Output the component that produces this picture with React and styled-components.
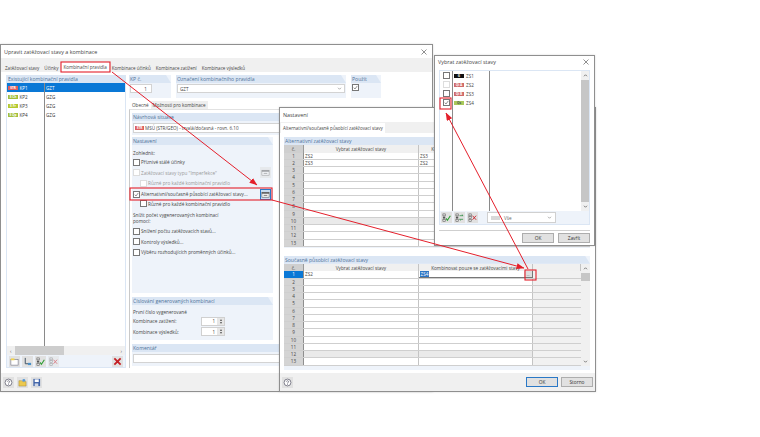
import React from "react";
import styled, { createGlobalStyle } from "styled-components";

const GlobalStyle = createGlobalStyle`
  html, body { margin: 0; padding: 0; background: #fff; }
  body { width: 760px; height: 437px; overflow: hidden; font-family: "Open Sans", "Liberation Sans", sans-serif; color: #333; }
  * { box-sizing: border-box; }
`;

const rulesList = [
  { badge: "STR", color: "#dd5f5f", name: "KP1", type: "GZT", selected: true },
  { badge: "S Ch", color: "#a3bf3d", name: "KP2", type: "GZG" },
  { badge: "S Fr", color: "#b5c92f", name: "KP3", type: "GZG" },
  { badge: "S Qp", color: "#a3bf3d", name: "KP4", type: "GZG" },
];

const loadCases = [
  { name: "ZS1", badge: "G", color: "#111", text: "#fff" },
  { name: "ZS2", badge: "Qi A", color: "#cf6b6b", text: "#fff", disabled: true },
  { name: "ZS3", badge: "Qi B", color: "#cf6b6b", text: "#fff" },
  { name: "ZS4", badge: "Qs", color: "#a9c85a", text: "#455", checked: true },
];

const rowNumbers = [1, 2, 3, 4, 5, 6, 7, 8, 9, 10, 11, 12, 13];

const Check = () => (
  <CheckMark viewBox="0 0 8 8">
    <path d="M1.2 4.2 3.2 6.4 6.9 1.4" fill="none" stroke="#444" strokeWidth="0.9" />
  </CheckMark>
);

const IconNew = () => (
  <svg viewBox="0 0 10 10" width="9" height="9">
    <rect x="1" y="3" width="8" height="6" fill="#fff" stroke="#667" strokeWidth="0.6" />
    <rect x="1" y="1.6" width="4" height="2" fill="#f2d34c" />
  </svg>
);
const IconCopy = () => (
  <svg viewBox="0 0 10 10" width="9" height="9">
    <path d="M2.5 1v6.5H8" fill="none" stroke="#456" strokeWidth="1.1" />
    <rect x="5.5" y="6.5" width="3.5" height="2.5" fill="#4a90c8" />
  </svg>
);
const IconCheckAll = () => (
  <svg viewBox="0 0 10 10" width="9" height="9">
    <rect x="1" y="1" width="2.6" height="2.2" fill="none" stroke="#555" strokeWidth="0.6" />
    <rect x="1" y="4" width="2.6" height="2.2" fill="#555" />
    <rect x="1" y="7" width="2.6" height="2.2" fill="none" stroke="#555" strokeWidth="0.6" />
    <path d="M4.5 6 6 8 9.3 3" fill="none" stroke="#2f9e35" strokeWidth="1.2" />
  </svg>
);
const IconSwap = () => (
  <svg viewBox="0 0 10 10" width="9" height="9">
    <rect x="1" y="1" width="2.6" height="2.2" fill="none" stroke="#555" strokeWidth="0.6" />
    <rect x="1" y="4" width="2.6" height="2.2" fill="#555" />
    <rect x="1" y="7" width="2.6" height="2.2" fill="none" stroke="#555" strokeWidth="0.6" />
    <path d="M5 3h4M9 3 7.6 1.8M9 7H5M5 7l1.4 1.2" fill="none" stroke="#2f8e45" strokeWidth="0.9" />
  </svg>
);
const IconClearAll = () => (
  <svg viewBox="0 0 10 10" width="9" height="9">
    <rect x="1" y="1" width="2.6" height="2.2" fill="none" stroke="#555" strokeWidth="0.6" />
    <rect x="1" y="4" width="2.6" height="2.2" fill="none" stroke="#555" strokeWidth="0.6" />
    <rect x="1" y="7" width="2.6" height="2.2" fill="none" stroke="#555" strokeWidth="0.6" />
    <path d="M5 3 9 7.5M9 3 5 7.5" stroke="#c8323a" strokeWidth="1.1" />
  </svg>
);
const IconDelete = () => (
  <svg viewBox="0 0 10 10" width="9" height="9">
    <path d="M1.5 1.5 8.5 8.5M8.5 1.5 1.5 8.5" stroke="#c41f25" strokeWidth="2" />
  </svg>
);
const IconHelp = () => (
  <svg viewBox="0 0 10 10" width="9" height="9">
    <circle cx="5" cy="5" r="3.8" fill="#fff" stroke="#556" strokeWidth="0.8" />
    <path d="M3.7 4C4 2.6 6.4 2.8 6.2 4.2 6 5.2 5 5 5 6.2M5 7v.8" fill="none" stroke="#556" strokeWidth="0.8" />
  </svg>
);
const IconOpen = () => (
  <svg viewBox="0 0 10 10" width="9" height="9">
    <path d="M1 3h3l1 1h4v5H1z" fill="#ecc94f" stroke="#9a8232" strokeWidth="0.5" />
    <circle cx="6.5" cy="2.6" r="1.6" fill="#5b9bd5" />
  </svg>
);
const IconSave = () => (
  <svg viewBox="0 0 10 10" width="9" height="9">
    <rect x="1.5" y="1" width="7.5" height="8" fill="#3f63a8" />
    <rect x="3" y="1.5" width="4.5" height="3" fill="#fff" />
    <rect x="3" y="6" width="4" height="3" fill="#cfd8e8" />
  </svg>
);
const IconDetail = () => (
  <svg viewBox="0 0 10 10" width="9" height="9">
    <rect x="1" y="2.5" width="8" height="5.5" fill="#f4f4f4" stroke="#555" strokeWidth="0.6" />
    <rect x="1" y="2.5" width="8" height="1.6" fill="#555" />
    <path d="M3 6h4" stroke="#555" strokeWidth="0.8" />
  </svg>
);

const CheckMark = styled.svg`
  display: block;
  width: 100%;
  height: 100%;
`;
const Desktop = styled.div`
  position: relative;
  width: 760px;
  height: 437px;
  overflow: hidden;
  background: #fff;
`;
const Window = styled.div`
  position: absolute;
  left: ${(p) => p.$x}px;
  top: ${(p) => p.$y}px;
  width: ${(p) => p.$w}px;
  height: ${(p) => p.$h}px;
  display: flex;
  flex-direction: column;
  background: #fff;
  border: 1px solid #8f8f8f;
  box-shadow: 0 0 2px rgba(0, 0, 0, 0.15);
`;
const TitleBar = styled.div`
  height: ${(p) => p.$h}px;
  flex: none;
  display: flex;
  align-items: center;
  justify-content: space-between;
  padding: 0 5px 0 3px;
  font-size: 5.4px;
  color: #444;
`;
const CloseX = styled.svg`
  width: 6px;
  height: 6px;
  flex: none;
`;
const TabRow = styled.div`
  flex: none;
  display: flex;
  align-items: flex-end;
  gap: 1px;
  height: ${(p) => p.$h}px;
  padding-left: ${(p) => p.$pad || 2}px;
  background: ${(p) => p.$bg || "#f0f0f0"};
`;
const Tab = styled.div`
  height: ${(p) => (p.$active ? 10 : 9)}px;
  padding: 0 2px;
  display: flex;
  align-items: center;
  font-size: 4.55px;
  white-space: nowrap;
  color: #444;
  background: ${(p) => (p.$active ? "#fff" : "#f0f0f0")};
`;
const Body = styled.div`
  flex: 1;
  min-height: 0;
  display: flex;
  gap: 3px;
  padding: 3px 0 5px 5px;
`;
const Footer = styled.div`
  flex: none;
  height: ${(p) => p.$h}px;
  display: flex;
  align-items: center;
  gap: 3px;
  padding: 0 ${(p) => p.$right || 3}px 0 2px;
  background: #f0f0f0;
`;
const Spacer = styled.div`
  flex: 1;
`;
const FooterButton = styled.div`
  width: 32px;
  height: 10px;
  display: flex;
  align-items: center;
  justify-content: center;
  font-size: 4.8px;
  color: #333;
  background: #e1e1e1;
  border: 1px solid ${(p) => (p.$primary ? "#2a78c6" : "#adadad")};
`;
const ToolButton = styled.div`
  width: ${(p) => p.$size || 11}px;
  height: ${(p) => p.$size || 11}px;
  flex: none;
  display: flex;
  align-items: center;
  justify-content: center;
  background: ${(p) => (p.$focus ? "#c9def2" : "#e1e1e1")};
  border: ${(p) => (p.$focus ? "1px solid #2a78c6" : "none")};
  opacity: ${(p) => (p.$dim ? 0.55 : 1)};
`;

const LeftPanel = styled.div`
  width: 120px;
  flex: none;
  display: flex;
  flex-direction: column;
  background: #eef3fa;
  border: 1px solid #dbe6f4;
  border-top: none;
`;
const GroupTitle = styled.div`
  height: ${(p) => p.$h || 8}px;
  flex: none;
  display: flex;
  align-items: center;
  padding-left: 1px;
  font-size: 5.1px;
  white-space: nowrap;
  color: #4f7299;
  background: #dbe6f4;
  clip-path: ${(p) => (p.$cut ? "polygon(0 0, calc(100% - 5px) 0, 100% 100%, 0 100%)" : "none")};
`;
const RuleList = styled.div`
  flex: 1;
  min-height: 0;
  display: flex;
  flex-direction: column;
  background: #fff;
  position: relative;
`;
const RuleColumnLine = styled.div`
  position: absolute;
  left: 37px;
  top: 0;
  bottom: 0;
  width: 1px;
  background: #8a8a8a;
`;
const RuleRow = styled.div`
  height: 9px;
  display: grid;
  grid-template-columns: 38px 1fr;
  align-items: center;
  font-size: 4.6px;
  color: ${(p) => (p.$selected ? "#fff" : "#333")};
  background: ${(p) => (p.$selected ? "#0a78d6" : "transparent")};
`;
const RuleCell = styled.div`
  display: flex;
  align-items: center;
  gap: 1.5px;
  padding-left: 1px;
`;
const Badge = styled.span`
  width: ${(p) => p.$w || 10}px;
  height: 4px;
  flex: none;
  display: inline-flex;
  align-items: center;
  justify-content: center;
  font-size: 3.2px;
  font-weight: 700;
  color: ${(p) => p.$text || "#fff"};
  background: ${(p) => p.$color};
`;
const HScroll = styled.div`
  height: 9px;
  flex: none;
  display: flex;
  align-items: center;
  justify-content: space-between;
  padding: 0 3px;
  font-size: 5px;
  color: #555;
  background: #f0f0f0;
  position: relative;
`;
const HThumb = styled.div`
  position: absolute;
  left: 8px;
  top: 0;
  width: 49px;
  height: 100%;
  background: #cdcdcd;
`;
const ToolRow = styled.div`
  height: ${(p) => p.$h || 12}px;
  flex: none;
  display: flex;
  align-items: center;
  gap: 2px;
  padding: 0 ${(p) => p.$pad || 2}px;
  background: #eef3fa;
`;

const RightColumn = styled.div`
  flex: 1;
  min-width: 0;
  display: flex;
  flex-direction: column;
`;
const HeaderRow = styled.div`
  flex: none;
  display: flex;
  gap: 5px;
  height: 23px;
`;
const HeaderGroup = styled.div`
  width: ${(p) => p.$w}px;
  flex: none;
  display: flex;
  flex-direction: column;
  background: #eef3fa;
`;
const FieldWrap = styled.div`
  padding: 1px 1px;
  flex: 1;
`;
const Field = styled.div`
  height: ${(p) => p.$h || 8}px;
  width: ${(p) => (p.$w ? p.$w + "px" : "auto")};
  display: flex;
  align-items: center;
  justify-content: ${(p) => (p.$end ? "flex-end" : "space-between")};
  gap: 1px;
  padding: 0 ${(p) => (p.$end ? 4 : 2)}px 0 ${(p) => p.$left ?? 2}px;
  font-size: 4.6px;
  color: #444;
  background: #fff;
  border: 1px solid #d3d3d3;
`;
const Caret = styled.svg`
  width: 5px;
  height: 3px;
  flex: none;
`;
const SubTabs = styled.div`
  flex: none;
  display: flex;
  align-items: flex-end;
  height: 8px;
  padding-left: 1px;
  margin-top: 3px;
`;
const SubTab = styled.div`
  height: 8px;
  padding: 0 2px;
  display: flex;
  align-items: center;
  font-size: 4.6px;
  color: #444;
  background: ${(p) => (p.$active ? "#fff" : "#eee")};
`;
const TabPage = styled.div`
  flex: 1;
  min-height: 0;
  display: flex;
  flex-direction: column;
  gap: 2px;
  padding: 3px 0 2px 2px;
  border-left: 1px solid #c9c9c9;
  border-top: 1px solid #e2e2e2;
`;
const Group = styled.div`
  flex: ${(p) => (p.$grow ? 1 : "none")};
  height: ${(p) => (p.$h ? p.$h + "px" : "auto")};
  width: ${(p) => (p.$w ? p.$w + "px" : "auto")};
  margin-top: ${(p) => p.$mt || 0}px;
  display: flex;
  flex-direction: column;
  background: #eef3fa;
`;
const GroupBody = styled.div`
  flex: 1;
  padding: ${(p) => p.$pad || "2px 2px"};
  display: flex;
  flex-direction: column;
`;
const Label = styled.div`
  height: ${(p) => p.$h || 8}px;
  margin-top: ${(p) => p.$mt || 0}px;
  display: flex;
  align-items: center;
  font-size: 4.7px;
  white-space: nowrap;
  color: ${(p) => (p.$dim ? "#999" : "#444")};
`;
const CheckLine = styled.div`
  height: ${(p) => p.$h || 10}px;
  margin-top: ${(p) => p.$mt || 0}px;
  display: flex;
  align-items: center;
  gap: 1px;
  padding-left: ${(p) => p.$indent || 0}px;
  font-size: 4.7px;
  white-space: nowrap;
  color: ${(p) => (p.$dim ? "#999" : "#444")};
`;
const Box = styled.div`
  width: 7px;
  height: 7px;
  flex: none;
  background: #fff;
  border: 0.7px solid ${(p) => (p.$dim ? "#ddd" : "#777")};
`;
const CheckText = styled.span`
  flex: 1;
`;
const SpinRow = styled.div`
  height: 10.5px;
  display: flex;
  align-items: center;
  justify-content: space-between;
  padding-right: 47px;
  font-size: 4.7px;
  color: #444;
`;
const Spin = styled.div`
  width: 24px;
  height: 9px;
  display: flex;
  align-items: center;
  justify-content: space-between;
  padding-left: 2px;
  font-size: 4.5px;
  background: #fff;
  border: 1px solid #d0d0d0;
`;
const SpinNumber = styled.span`
  flex: 1;
  text-align: right;
  padding-right: 2px;
`;
const SpinArrows = styled.div`
  width: 7px;
  height: 100%;
  display: flex;
  flex-direction: column;
  align-items: center;
  justify-content: center;
  gap: 1px;
  background: #e6e6e6;
`;
const SpinTick = styled.div`
  width: 0;
  height: 0;
  border-left: 1.5px solid transparent;
  border-right: 1.5px solid transparent;
  border-${(p) => (p.$down ? "top" : "bottom")}: 2px solid #555;
`;

const SettingsBody = styled.div`
  flex: 1;
  min-height: 0;
  display: flex;
  flex-direction: column;
  padding: 4px 5px 3px 4px;
`;
const TableGroup = styled.div`
  flex: none;
  background: #eef3fa;
  margin-bottom: ${(p) => p.$mb || 0}px;
  padding-bottom: ${(p) => p.$pb || 0}px;
`;
const TableWrap = styled.div`
  display: flex;
`;
const Table = styled.div`
  flex: 1;
  min-width: 0;
`;
const TableHead = styled.div`
  display: grid;
  grid-template-columns: 20px 115px 114px 1fr;
  height: 7.5px;
  font-size: 4.7px;
  color: #444;
  background: #f0f0f0;
`;
const HeadCell = styled.div`
  display: flex;
  align-items: center;
  justify-content: center;
  overflow: hidden;
  white-space: nowrap;
  background: ${(p) => (p.$first ? "#cfcfcf" : "#f0f0f0")};
  border-right: 1px solid ${(p) => (p.$first ? "#9a9a9a" : "#c4c4c4")};
`;
const TableRow = styled.div`
  display: grid;
  grid-template-columns: 20px 115px 114px 1fr;
  height: 7.25px;
  font-size: 4.6px;
  color: #444;
  background: ${(p) => (p.$muted ? "#eaeaea" : "#fff")};
  border-bottom: 0.75px solid #cfcfcf;
`;
const NumberCell = styled.div`
  display: flex;
  align-items: center;
  justify-content: center;
  color: ${(p) => (p.$active ? "#fff" : "#444")};
  background: ${(p) => (p.$active ? "#0a78d6" : "#d4d4d4")};
  border-right: 1px solid #8f8f8f;
`;
const DataCell = styled.div`
  display: flex;
  align-items: center;
  justify-content: space-between;
  padding-left: 1px;
  overflow: hidden;
  border-right: ${(p) => (p.$edit ? "1px solid #777" : "1px solid #c4c4c4")};
  border-bottom: ${(p) => (p.$edit ? "1px solid #777" : "none")};
`;
const EndCell = styled.div`
  background: #f1f1f1;
`;
const SelectedText = styled.span`
  color: #fff;
  background: #2b74c4;
  padding: 0 0.5px;
`;
const BrowseButton = styled.div`
  width: 8px;
  height: 100%;
  display: flex;
  align-items: flex-end;
  justify-content: center;
  font-size: 4px;
  line-height: 4px;
  background: #dedede;
`;
const VScroll = styled.div`
  width: ${(p) => p.$w || 8}px;
  flex: none;
  display: flex;
  flex-direction: column;
  align-items: center;
  background: #f0f0f0;
`;
const ScrollThumb = styled.div`
  width: 100%;
  flex: ${(p) => (p.$grow ? 1 : "none")};
  height: ${(p) => (p.$h ? p.$h + "px" : "auto")};
  background: #c6c6c6;
`;
const ScrollTrack = styled.div`
  flex: 1;
`;
const ScrollArrow = styled.svg`
  width: 5px;
  height: 3px;
  flex: none;
  margin: 3px 0;
`;

const PickerBody = styled.div`
  flex: 1;
  min-height: 0;
  display: flex;
  flex-direction: column;
  padding: 2px 4px 0 4px;
`;
const PickerPanel = styled.div`
  flex: none;
  background: #eef3fa;
  border: 1px solid #dbe6f4;
`;
const PickerList = styled.div`
  height: 140px;
  display: grid;
  grid-template-columns: 13px 37px 1fr 8px;
  background: #fff;
`;
const PickerChecks = styled.div`
  display: flex;
  flex-direction: column;
  align-items: center;
  border-right: 1px solid #8a8a8a;
`;
const PickerNames = styled.div`
  display: flex;
  flex-direction: column;
  border-right: 1px solid #8a8a8a;
`;
const PickerCheck = styled.div`
  height: 9px;
  display: flex;
  align-items: center;
`;
const PickerName = styled.div`
  height: 9px;
  display: flex;
  align-items: center;
  gap: 2px;
  padding-left: 1px;
  font-size: 4.6px;
  color: #444;
`;
const PickerBlank = styled.div``;
const FilterSelect = styled.div`
  width: 69px;
  height: 11px;
  margin-left: 7px;
  display: flex;
  align-items: center;
  justify-content: space-between;
  padding: 0 3px;
  font-size: 4.6px;
  color: #666;
  background: #fff;
  border: 1px solid #d0d0d0;
`;
const FilterLabel = styled.div`
  display: flex;
  align-items: center;
  gap: ${(p) => p.$gap ?? 4}px;
  white-space: nowrap;
`;
const Swatch = styled.div`
  width: 9px;
  height: 4px;
  background: #d8d8d8;
`;
const Divider = styled.div`
  flex: none;
  height: 1px;
  margin-top: 5px;
  background: #cfcfcf;
`;
const PickerFooter = styled.div`
  flex: 1;
  display: flex;
  align-items: center;
  justify-content: flex-end;
  gap: 4px;
`;

const Marks = styled.svg`
  position: absolute;
  left: 0;
  top: 0;
  width: 760px;
  height: 437px;
  pointer-events: none;
`;

function SettingsTable({ rows, active, muted, withScroll }) {
  return (
    <TableWrap>
      <Table>
        <TableHead>
          <HeadCell $first>č.</HeadCell>
          <HeadCell>Vybrat zatěžovací stavy</HeadCell>
          <HeadCell>Kombinovat pouze se zatěžovacími stavy</HeadCell>
          <HeadCell />
        </TableHead>
        {rowNumbers.map((n) => {
          const row = rows[n - 1] || [];
          const editing = active && n === 1;
          return (
            <TableRow key={n} $muted={muted === n}>
              <NumberCell $active={editing}>{n}</NumberCell>
              <DataCell>{row[0]}</DataCell>
              <DataCell $edit={editing}>
                {editing ? <SelectedText>{row[1]}</SelectedText> : row[1]}
                {editing && <BrowseButton>...</BrowseButton>}
              </DataCell>
              <EndCell />
            </TableRow>
          );
        })}
      </Table>
      {withScroll && (
        <VScroll $w={9}>
          <ScrollArrow viewBox="0 0 6 4"><path d="M1 3 3 1l2 2" fill="none" stroke="#555" /></ScrollArrow>
          <ScrollThumb $h={8} />
          <ScrollTrack />
          <ScrollArrow viewBox="0 0 6 4"><path d="M1 1l2 2 2-2" fill="none" stroke="#555" /></ScrollArrow>
        </VScroll>
      )}
    </TableWrap>
  );
}

function CloseIcon() {
  return (
    <CloseX viewBox="0 0 6 6">
      <path d="M.5.5l5 5M5.5.5l-5 5" stroke="#444" strokeWidth="0.6" />
    </CloseX>
  );
}

export default function App() {
  return (
    <Desktop>
      <GlobalStyle />

      <Window $x={0} $y={44} $w={433} $h={348}>
        <TitleBar $h={13}>
          <span>Upravit zatěžovací stavy a kombinace</span>
          <CloseIcon />
        </TitleBar>
        <TabRow $h={14}>
          <Tab>Zatěžovací stavy</Tab>
          <Tab>Účinky</Tab>
          <Tab $active>Kombinační pravidla</Tab>
          <Tab>Kombinace účinků</Tab>
          <Tab>Kombinace zatížení</Tab>
          <Tab>Kombinace výsledků</Tab>
        </TabRow>
        <Body>
          <LeftPanel>
            <GroupTitle>Existující kombinační pravidla</GroupTitle>
            <RuleList>
              <RuleColumnLine />
              {rulesList.map((rule) => (
                <RuleRow key={rule.name} $selected={rule.selected}>
                  <RuleCell>
                    <Badge $color={rule.color}>{rule.badge}</Badge>
                    {rule.name}
                  </RuleCell>
                  <RuleCell>{rule.type}</RuleCell>
                </RuleRow>
              ))}
            </RuleList>
            <HScroll>
              <HThumb />
              <span>‹</span>
              <span>›</span>
            </HScroll>
            <ToolRow>
              <ToolButton><IconNew /></ToolButton>
              <ToolButton><IconCopy /></ToolButton>
              <ToolButton><IconCheckAll /></ToolButton>
              <ToolButton $dim><IconClearAll /></ToolButton>
              <Spacer />
              <ToolButton><IconDelete /></ToolButton>
            </ToolRow>
          </LeftPanel>
          <RightColumn>
            <HeaderRow>
              <HeaderGroup $w={42}>
                <GroupTitle $cut>KP č.</GroupTitle>
                <FieldWrap>
                  <Field $h={9} $w={22} $end>1</Field>
                </FieldWrap>
              </HeaderGroup>
              <HeaderGroup $w={170}>
                <GroupTitle $cut>Označení kombinačního pravidla</GroupTitle>
                <FieldWrap>
                  <Field $h={9}>
                    GZT
                    <Caret viewBox="0 0 6 4"><path d="M1 1l2 2 2-2" fill="none" stroke="#666" strokeWidth="0.7" /></Caret>
                  </Field>
                </FieldWrap>
              </HeaderGroup>
              <HeaderGroup $w={30}>
                <GroupTitle $cut>Použít</GroupTitle>
                <FieldWrap>
                  <Box><Check /></Box>
                </FieldWrap>
              </HeaderGroup>
            </HeaderRow>
            <SubTabs>
              <SubTab $active>Obecné</SubTab>
              <SubTab>Možnosti pro kombinace</SubTab>
            </SubTabs>
            <TabPage>
              <Group $h={22}>
                <GroupTitle>Návrhová situace</GroupTitle>
                <GroupBody $pad="2px 1px">
                  <Field $h={10} $left={1}>
                    <FilterLabel $gap={1}>
                      <Badge $w={9} $color="#dd5f5f">STR</Badge>
                      <span>MSÚ (STR/GEO) - trvalá/dočasná - rovn. 6.10</span>
                    </FilterLabel>
                  </Field>
                </GroupBody>
              </Group>
              <Group $h={156} $w={141}>
                <GroupTitle $cut>Nastavení</GroupTitle>
                <GroupBody $pad="4px 2px 0 1px">
                  <Label $h={8}>Zohlednit:</Label>
                  <CheckLine><Box /><CheckText>Příznivé stálé účinky</CheckText></CheckLine>
                  <CheckLine $dim $h={11}><Box $dim /><CheckText>Zatěžovací stavy typu "Imperfekce"</CheckText><ToolButton $dim><IconDetail /></ToolButton></CheckLine>
                  <CheckLine $dim $indent={7}><Box $dim /><CheckText>Různé pro každé kombinační pravidlo</CheckText></CheckLine>
                  <CheckLine $h={12}><Box><Check /></Box><CheckText>Alternativní/současně působící zatěžovací stavy...</CheckText><ToolButton $focus><IconDetail /></ToolButton></CheckLine>
                  <CheckLine $h={7} $indent={7}><Box /><CheckText>Různé pro každé kombinační pravidlo</CheckText></CheckLine>
                  <Label $h={6} $mt={5}>Snížit počet vygenerovaných kombinací</Label>
                  <Label $h={6}>pomocí:</Label>
                  <CheckLine $mt={2}><Box /><CheckText>Snížení počtu zatěžovacích stavů...</CheckText></CheckLine>
                  <CheckLine $h={11}><Box /><CheckText>Kontroly výsledků...</CheckText></CheckLine>
                  <CheckLine><Box /><CheckText>Výběru rozhodujících proměnných účinků...</CheckText></CheckLine>
                </GroupBody>
              </Group>
              <Group $h={43} $w={141} $mt={2}>
                <GroupTitle $cut>Číslování generovaných kombinací</GroupTitle>
                <GroupBody $pad="3px 1px">
                  <Label $h={8}>První číslo vygenerované</Label>
                  <SpinRow>
                    Kombinace zatížení:
                    <Spin>
                      <SpinNumber>1</SpinNumber>
                      <SpinArrows><SpinTick /><SpinTick $down /></SpinArrows>
                    </Spin>
                  </SpinRow>
                  <SpinRow>
                    Kombinace výsledků:
                    <Spin>
                      <SpinNumber>1</SpinNumber>
                      <SpinArrows><SpinTick /><SpinTick $down /></SpinArrows>
                    </Spin>
                  </SpinRow>
                </GroupBody>
              </Group>
              <Group $grow $mt={2}>
                <GroupTitle>Komentář</GroupTitle>
                <GroupBody $pad="2px 1px">
                  <Field $h={9} />
                </GroupBody>
              </Group>
            </TabPage>
          </RightColumn>
        </Body>
        <Footer $h={18}>
          <ToolButton><IconHelp /></ToolButton>
          <ToolButton><IconOpen /></ToolButton>
          <ToolButton><IconSave /></ToolButton>
        </Footer>
      </Window>

      <Window $x={279} $y={107} $w={317} $h={285}>
        <TitleBar $h={14}>
          <span>Nastavení</span>
        </TitleBar>
        <TabRow $h={11} $pad={1}>
          <Tab $active>Alternativní/současně působící zatěžovací stavy</Tab>
        </TabRow>
        <SettingsBody>
          <TableGroup $mb={8} $pb={1}>
            <GroupTitle>Alternativní zatěžovací stavy</GroupTitle>
            <SettingsTable rows={[["ZS2", "ZS3"], ["ZS3", "ZS2"]]} muted={10} />
          </TableGroup>
          <TableGroup $pb={4}>
            <GroupTitle $cut>Současně působící zatěžovací stavy</GroupTitle>
            <SettingsTable rows={[["ZS2", "ZS4"]]} active muted={12} withScroll />
          </TableGroup>
        </SettingsBody>
        <Footer $h={18} $right={2}>
          <ToolButton><IconHelp /></ToolButton>
          <Spacer />
          <FooterButton $primary>OK</FooterButton>
          <FooterButton>Storno</FooterButton>
        </Footer>
      </Window>

      <Window $x={434} $y={55} $w={161} $h={191}>
        <TitleBar $h={12}>
          <span>Vybrat zatěžovací stavy</span>
          <CloseIcon />
        </TitleBar>
        <PickerBody>
          <PickerPanel>
            <PickerList>
              <PickerChecks>
                {loadCases.map((c) => (
                  <PickerCheck key={c.name}>
                    <Box $dim={c.disabled}>{c.checked && <Check />}</Box>
                  </PickerCheck>
                ))}
              </PickerChecks>
              <PickerNames>
                {loadCases.map((c) => (
                  <PickerName key={c.name}>
                    <Badge $w={10} $color={c.color} $text={c.text}>{c.badge}</Badge>
                    {c.name}
                  </PickerName>
                ))}
              </PickerNames>
              <PickerBlank />
              <VScroll>
                <ScrollArrow viewBox="0 0 6 4"><path d="M1 3 3 1l2 2" fill="none" stroke="#555" /></ScrollArrow>
                <ScrollThumb $grow />
                <ScrollArrow viewBox="0 0 6 4"><path d="M1 1l2 2 2-2" fill="none" stroke="#555" /></ScrollArrow>
              </VScroll>
            </PickerList>
            <ToolRow $h={13} $pad={1}>
              <ToolButton><IconCheckAll /></ToolButton>
              <ToolButton><IconSwap /></ToolButton>
              <ToolButton><IconClearAll /></ToolButton>
              <FilterSelect>
                <FilterLabel><Swatch />Vše</FilterLabel>
                <Caret viewBox="0 0 6 4"><path d="M1 1l2 2 2-2" fill="none" stroke="#666" strokeWidth="0.7" /></Caret>
              </FilterSelect>
            </ToolRow>
          </PickerPanel>
          <Divider />
          <PickerFooter>
            <FooterButton>OK</FooterButton>
            <FooterButton>Zavřít</FooterButton>
          </PickerFooter>
        </PickerBody>
      </Window>

      <Marks viewBox="0 0 760 437">
        <defs>
          <marker id="tip" markerWidth="8" markerHeight="6" refX="7.5" refY="3" orient="auto" markerUnits="userSpaceOnUse">
            <path d="M0 0 8 3 0 6z" fill="#e41f2b" />
          </marker>
        </defs>
        <g fill="none" stroke="#e41f2b">
          <rect x="61" y="62" width="49" height="10" strokeWidth="1.1" />
          <rect x="130" y="188" width="142" height="12" strokeWidth="1.1" />
          <rect x="525" y="270" width="11" height="10" strokeWidth="1.1" />
          <rect x="440" y="98" width="11" height="11" strokeWidth="1.1" />
          <path d="M112 72 257 185" strokeWidth="1" markerEnd="url(#tip)" />
          <path d="M272 200 524 268" strokeWidth="1" markerEnd="url(#tip)" />
          <path d="M528 269 446 113" strokeWidth="1" markerEnd="url(#tip)" />
        </g>
      </Marks>
    </Desktop>
  );
}
